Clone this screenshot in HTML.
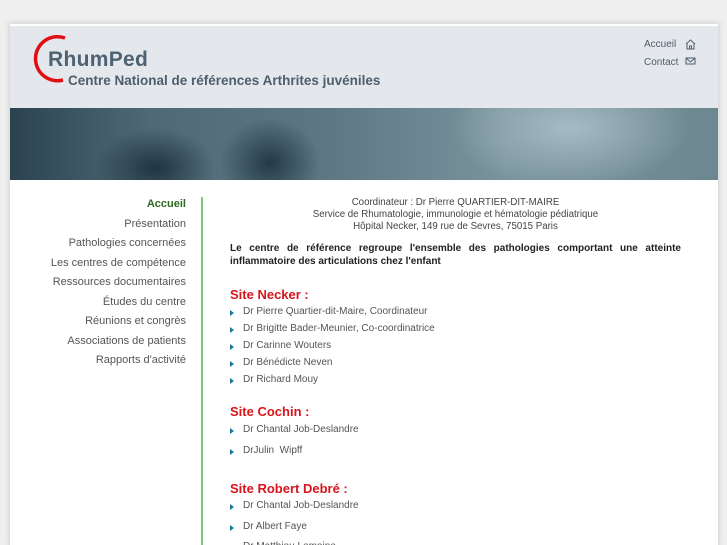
<!DOCTYPE html>
<html><head><meta charset="utf-8"><style>
html,body{margin:0;width:727px;height:545px;overflow:hidden}
body{background:#efefef;font-family:"Liberation Sans",sans-serif;position:relative}
.box{position:absolute;left:10px;top:24px;width:708px;height:521px;background:#fff;box-shadow:0 0 4px 2px #d8d8d8}
.hdr{position:absolute;left:10px;top:26px;width:708px;height:82px;background:#e4e7eb}
.ban{position:absolute;left:10px;top:108px;width:708px;height:72px;background:
radial-gradient(ellipse 60px 40px at 145px 60px,#1f3440 0,transparent 100%),
radial-gradient(ellipse 50px 45px at 260px 55px,#233a46 0,transparent 100%),
radial-gradient(ellipse 120px 60px at 560px 20px,#a6bcc4 0,transparent 100%),
linear-gradient(90deg,#2b4350 0%,#4f6a76 20%,#5d7883 45%,#7a949e 70%,#6d8791 100%)}
.t{position:absolute;white-space:nowrap}
.nav{position:absolute;right:541px;text-align:right;font-size:11px;color:#555}
.li{position:absolute;left:243px;font-size:10px;color:#555}
.li:before{content:"";position:absolute;left:-13px;top:4px;border-left:4px solid #1b7a9a;border-top:3px solid transparent;border-bottom:3px solid transparent}
.h{position:absolute;left:230px;font-size:13px;font-weight:bold;color:#d8141c}
</style></head><body>
<div class="box"></div>
<div class="hdr"></div>
<svg style="position:absolute;left:32px;top:34px" width="40" height="50"><path d="M33 4 A22 22 0 1 0 31 46" fill="none" stroke="#e00d12" stroke-width="3.5"/></svg>
<div class="t" style="left:48px;top:48px;font-size:21px;font-weight:bold;color:#4d6272;letter-spacing:0.3px">RhumPed</div>
<div class="t" style="left:68px;top:73px;font-size:13.5px;font-weight:bold;color:#4d5e6c">Centre National de références Arthrites juvéniles</div>
<div class="t" style="left:644px;top:39px;font-size:10px;color:#4d5e6c">Accueil</div>
<div class="t" style="left:644px;top:57px;font-size:10px;color:#4d5e6c">Contact</div>
<svg style="position:absolute;left:685px;top:39px" width="11" height="26"><path d="M1 5 L5.5 1 L10 5 M2 4.5 V10 H9 V4.5 M4.5 10 V7 H6.5 V10" fill="none" stroke="#4d5e6c" stroke-width="1"/><rect x="1" y="19" width="9" height="6" fill="none" stroke="#4d5e6c"/><path d="M1 19 L5.5 23 L10 19" fill="none" stroke="#4d5e6c"/></svg>
<div class="ban"></div>
<div style="position:absolute;left:201px;top:197px;width:2px;height:348px;background:#7fc87a"></div>
<div class="nav" style="top:198px;font-weight:bold;color:#2b6a1f">Accueil</div>
<div class="nav" style="top:218px">Présentation</div>
<div class="nav" style="top:237px">Pathologies concernées</div>
<div class="nav" style="top:257px">Les centres de compétence</div>
<div class="nav" style="top:276px">Ressources documentaires</div>
<div class="nav" style="top:296px">Études du centre</div>
<div class="nav" style="top:315px">Réunions et congrès</div>
<div class="nav" style="top:335px">Associations de patients</div>
<div class="nav" style="top:354px">Rapports d'activité</div>
<div style="position:absolute;left:230px;width:451px;top:197px;text-align:center;font-size:9.7px;line-height:12px;color:#444">Coordinateur : Dr Pierre QUARTIER-DIT-MAIRE<br>Service de Rhumatologie, immunologie et hématologie pédiatrique<br>Hôpital Necker, 149 rue de Sevres, 75015 Paris</div>
<div style="position:absolute;left:230px;width:451px;top:242px;text-align:justify;text-align-last:left;font-size:10px;line-height:13px;font-weight:bold;color:#222">Le centre de référence regroupe l'ensemble des pathologies comportant une atteinte inflammatoire des articulations chez l'enfant</div>
<div class="h" style="top:287px">Site Necker :</div>
<div class="li" style="top:306px">Dr Pierre Quartier-dit-Maire, Coordinateur</div>
<div class="li" style="top:323px">Dr Brigitte Bader-Meunier, Co-coordinatrice</div>
<div class="li" style="top:340px">Dr Carinne Wouters</div>
<div class="li" style="top:357px">Dr Bénédicte Neven</div>
<div class="li" style="top:374px">Dr Richard Mouy</div>
<div class="h" style="top:404px">Site Cochin :</div>
<div class="li" style="top:424px">Dr Chantal Job-Deslandre</div>
<div class="li" style="top:445px">DrJulin&nbsp; Wipff</div>
<div class="h" style="top:481px">Site Robert Debré :</div>
<div class="li" style="top:500px">Dr Chantal Job-Deslandre</div>
<div class="li" style="top:521px">Dr Albert Faye</div>
<div class="li" style="top:541px">Dr Matthieu Lemoine</div>
</body></html>
